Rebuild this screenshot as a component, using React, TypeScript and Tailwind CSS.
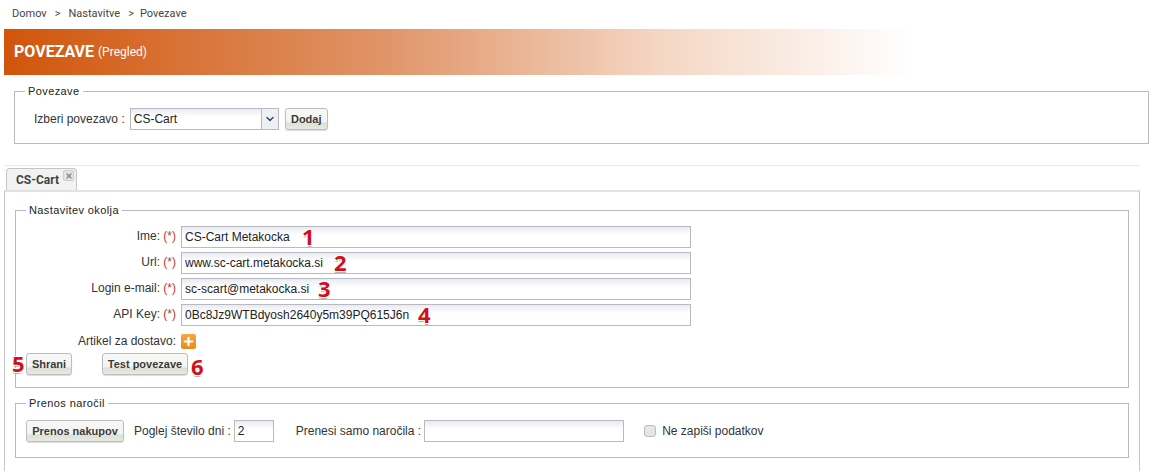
import { ChevronDown, Plus, X } from "lucide-react"

const badge =
	"absolute font-['Open_Sans',sans-serif] font-bold text-[22px] leading-none text-[#d0101a] [text-shadow:-1px_-1px_0_#fff,1px_-1px_0_#fff,-1px_1px_0_#fff,1px_1px_0_#fff,0_2px_1px_#aaa]"
const fieldset = "border border-[#b9b9c3] mx-0"
const legend = "ml-[10px] px-[3px] text-[11px] leading-[14px] tracking-[0.4px] text-[#222]"
const input =
	"block h-[22px] border border-[#b9b9c3] px-[3px] text-[12px] text-[#222] outline-none bg-[linear-gradient(#e9ebef,#fff_8px)] bg-white"
const button =
	"h-[22px] rounded-[3px] border border-[#bdbdbd] bg-[linear-gradient(#f8f8f6,#f3f3f0_65%,#dbe0d3_70%,#e8eae4)] text-[11px] font-bold text-[#3a3a3a] shadow-[0_1px_1px_#ddd]"

const fields = [
	{ label: "Ime:", value: "CS-Cart Metakocka", num: "1", left: 286 },
	{ label: "Url:", value: "www.sc-cart.metakocka.si", num: "2", left: 318 },
	{ label: "Login e-mail:", value: "sc-scart@metakocka.si", num: "3", left: 302 },
	{ label: "API Key:", value: "0Bc8Jz9WTBdyosh2640y5m39PQ615J6n", num: "4", left: 402 },
]

export default function App() {
	return (
		<div className="w-[1153px] h-[471px] overflow-hidden bg-white font-['Liberation_Sans',Arial,sans-serif] text-[12px] text-[#333]">
			<div className="flex h-[29px] items-start gap-[8px] pl-[12px] pt-[7px] font-['Roboto',sans-serif] text-[11px] leading-[14px] text-[#444]">
				<span>Domov</span>
				<span>&gt;</span>
				<span>Nastavitve</span>
				<span>&gt;</span>
				<span className="ml-[-2px]">Povezave</span>
			</div>
			<div className="ml-[4px] flex h-[46px] w-[908px] items-center gap-[4px] bg-[linear-gradient(90deg,#d1550a,#e09468_42%,#f4d6c3_72%,#fff)] pl-[10px] font-['Roboto',sans-serif] text-white">
				<span className="text-[16px] font-bold">POVEZAVE</span>
				<span className="text-[12px]">(Pregled)</span>
			</div>

			<fieldset className={`${fieldset} ml-[14px] mt-[9px] h-[60px] w-[1135px]`}>
				<legend className={legend}>Povezave</legend>
				<div className="flex items-center pl-[19px] pt-[10px]">
					<span>Izberi povezavo :</span>
					<div className="ml-[5px] flex h-[22px] w-[149px] items-stretch border border-[#b9b9c3] bg-[linear-gradient(#e9ebef,#fff_8px)]">
						<span className="flex-1 pl-[3px] leading-[20px] text-[#222]">CS-Cart</span>
						<span className="flex w-[17px] items-center justify-center border-l border-[#b9b9c3] bg-[#eef0f4]">
							<ChevronDown size={12} strokeWidth={3} className="text-[#2b4a7a]" />
						</span>
					</div>
					<button className={`${button} ml-[6px] w-[43px]`}>Dodaj</button>
				</div>
			</fieldset>

			<div className="ml-[4px] mt-[21px] w-[1136px] border-t border-[#e8e8e8] pt-[2px]">
				<div className="ml-[2px] flex h-[22px] w-[71px] items-center gap-[4px] rounded-t-[4px] border border-b-0 border-[#c4c4c4] bg-[#f2f2f2] pl-[9px] font-['Roboto',sans-serif] text-[12px] font-bold text-[#444]">
					<span>CS-Cart</span>
					<span className="mb-[8px] flex h-[11px] w-[11px] items-center justify-center rounded-[2px] border border-[#ccc] bg-[#e4e4e4]">
						<X size={8} strokeWidth={4} className="text-[#888]" />
					</span>
				</div>
				<div className="h-[290px] border-x border-[#c8c8c8] border-t-[2px] border-t-[#e2e2e2] pl-[10px] pt-[11px]">
					<fieldset className={`${fieldset} h-[185px] w-[1114px]`}>
						<legend className={legend}>Nastavitev okolja</legend>
						<div className="flex flex-col gap-[4px] pt-[9px]">
							{fields.map((f) => (
								<div key={f.label} className="relative flex items-center">
									<span className="w-[160px] pb-[2px] text-right">
										{f.label} <span className="text-[#c0392b]">(*)</span>
									</span>
									<input readOnly value={f.value} className={`${input} ml-[5px] w-[510px]`} />
									<span className={badge} style={{ left: f.left, top: -1 }}>
										{f.num}
									</span>
								</div>
							))}
						</div>
						<div className="mt-[4px] flex h-[22px] items-center">
							<span className="w-[160px] text-right">Artikel za dostavo:</span>
							<span className="ml-[5px] flex h-[15px] w-[15px] items-center justify-center rounded-[2px] bg-[linear-gradient(#f5a843,#ea8a1c)]">
								<Plus size={13} strokeWidth={4} className="text-white" />
							</span>
						</div>
						<div className="relative mt-[1px] flex items-center pl-[10px]">
							<span className={badge} style={{ left: -4, top: -1 }}>5</span>
							<button className={`${button} w-[46px]`}>Shrani</button>
							<button className={`${button} ml-[30px] w-[86px]`}>Test povezave</button>
							<span className={badge} style={{ left: 175, top: 2 }}>6</span>
						</div>
					</fieldset>

					<fieldset className={`${fieldset} mt-[8px] h-[62px] w-[1114px]`}>
						<legend className={legend}>Prenos naročil</legend>
						<div className="flex items-center pl-[10px] pt-[10px]">
							<button className={`${button} w-[98px]`}>Prenos nakupov</button>
							<span className="ml-[10px]">Poglej število dni :</span>
							<input readOnly value="2" className={`${input} ml-[3px] w-[40px]`} />
							<span className="ml-[22px]">Prenesi samo naročila :</span>
							<input readOnly value="" className={`${input} ml-[3px] w-[200px]`} />
							<span className="ml-[20px] h-[12px] w-[12px] rounded-[3px] border border-[#bbb] bg-[#e6e6e6]" />
							<span className="ml-[6px]">Ne zapiši podatkov</span>
						</div>
					</fieldset>
				</div>
			</div>
		</div>
	)
}
